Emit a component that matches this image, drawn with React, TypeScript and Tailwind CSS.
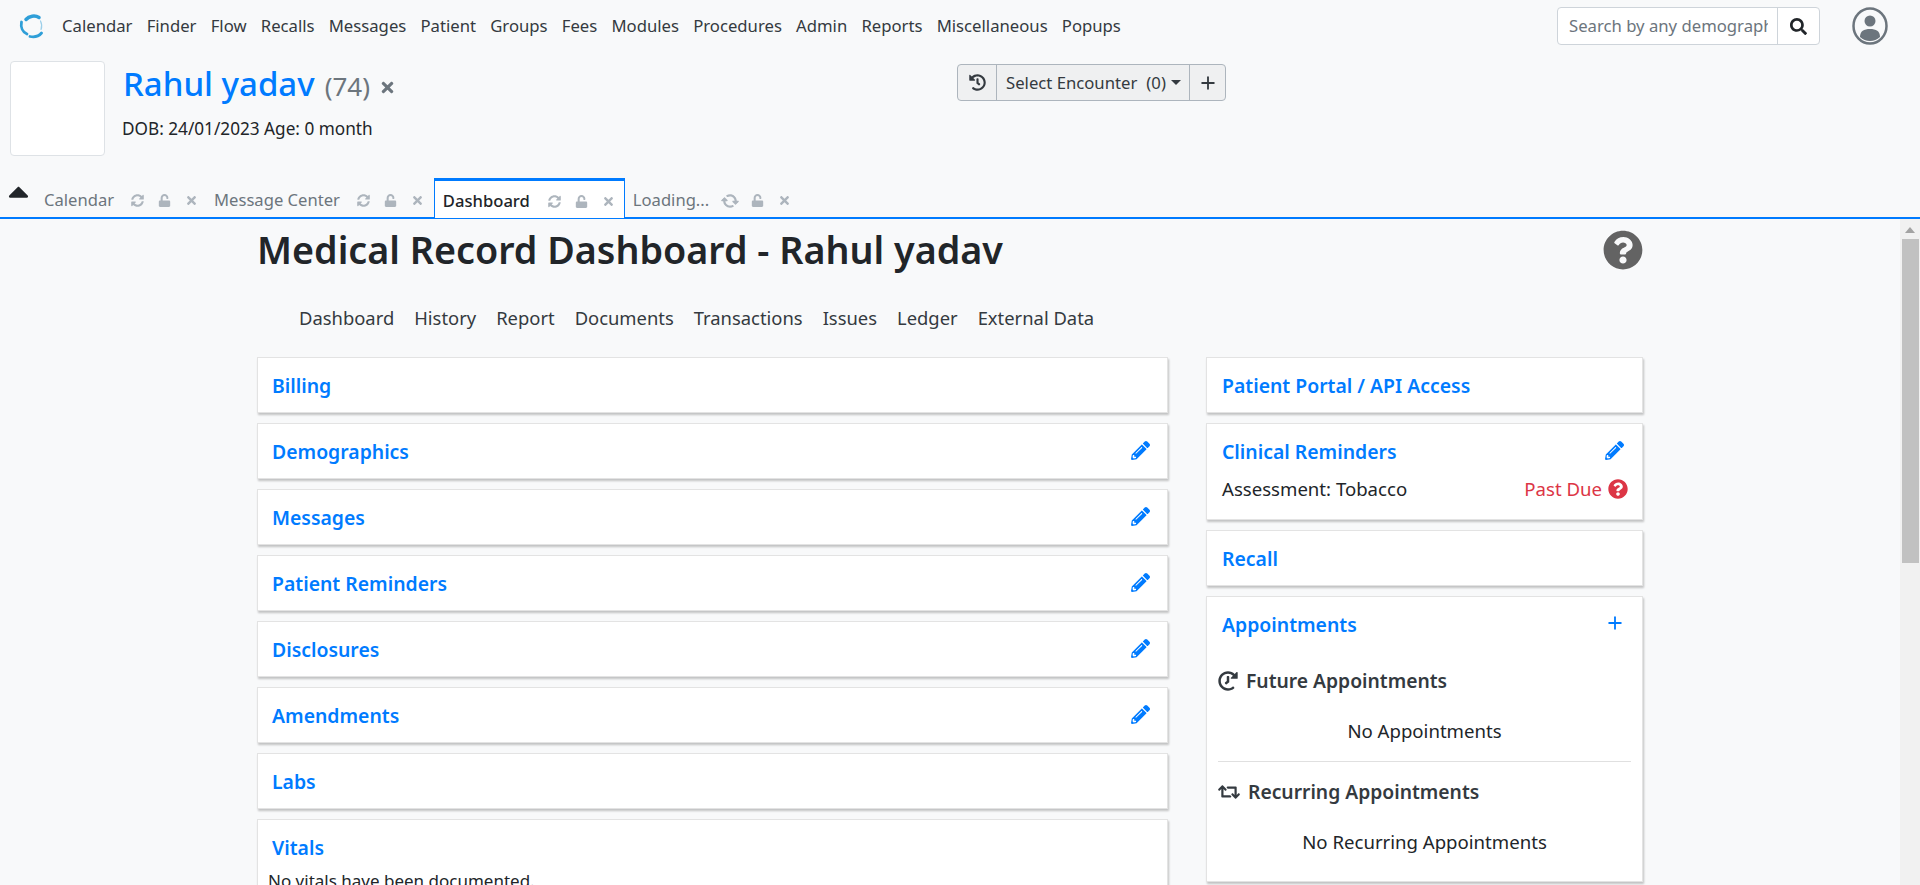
import { Plus } from "lucide-react";
import { FaCaretUp, FaHistory, FaPencilAlt, FaQuestionCircle, FaRetweet, FaSearch, FaSyncAlt, FaTimes, FaUnlock } from "react-icons/fa";

const navItems = ["Calendar", "Finder", "Flow", "Recalls", "Messages", "Patient", "Groups", "Fees", "Modules", "Procedures", "Admin", "Reports", "Miscellaneous", "Popups"];
const subNav = ["Dashboard", "History", "Report", "Documents", "Transactions", "Issues", "Ledger", "External Data"];
const leftCards = [
  { title: "Billing", edit: false },
  { title: "Demographics", edit: true },
  { title: "Messages", edit: true },
  { title: "Patient Reminders", edit: true },
  { title: "Disclosures", edit: true },
  { title: "Amendments", edit: true },
  { title: "Labs", edit: false },
];

function Logo() {
  return (
    <svg viewBox="0 0 26 26" className="w-[26px] h-[26px]" fill="none" stroke="#2f9fd8" strokeLinecap="round">
      <path d="M7 6.500C10 3 16 2 20 4.500" strokeWidth="3.500" />
      <path d="M2.500 9C1.500 14 3.500 19 8 21" strokeWidth="2.800" />
      <path d="M11 23.500C16 24.500 20 23 22.500 20" strokeWidth="2.800" />
      <path d="M21.500 8C23 11 23 14 22 16.500" strokeWidth="1.200" stroke="#9ccfe9" />
    </svg>
  );
}

function UserIcon() {
  return (
    <svg viewBox="0 0 36 38" className="w-[36px] h-[38px]">
      <ellipse cx="18" cy="19" rx="16.500" ry="17.500" fill="none" stroke="#6c757d" strokeWidth="2.500" />
      <circle cx="18" cy="14" r="5.500" fill="#6c757d" />
      <path d="M8 30c0-6 4-8 10-8s10 2 10 8c-3 2.500-6 4-10 4s-7-1.500-10-4z" fill="#6c757d" />
    </svg>
  );
}

function Tab({ label, active, loading }: { label: string; active?: boolean; loading?: boolean }) {
  return (
    <div
      className={
        active
          ? "h-[40px] w-[191px] flex items-center pl-[8px] pt-[4px] bg-white border-x border-t-[3px] border-[#007bff] -mb-px text-[#212529] font-medium"
          : "h-[39px] flex items-center pt-[6px] text-[#6c757d]"
      }
    >
      <span className={active ? "w-[105px]" : ""}>{label}</span>
      <span className={active ? "flex items-center text-[#adb5bd]" : loading ? "flex items-center text-[#adb5bd] ml-[14px]" : "flex items-center text-[#adb5bd] ml-[17px]"}>
        <FaSyncAlt className={loading ? "text-[14px] rotate-45" : "text-[13px]"} />
        <FaUnlock className="text-[13px] ml-[14px]" />
        <FaTimes className="text-[13px] ml-[14px]" />
      </span>
    </div>
  );
}

function Card({ title, edit, add, children, className }: { title: string; edit?: boolean; add?: boolean; children?: React.ReactNode; className?: string }) {
  return (
    <div className={"bg-white border border-[#e3e3e3] shadow-[1px_2px_2px_rgba(0,0,0,0.22)] " + (className ?? "px-[14px]")}>
      <div className="h-[54px] pt-[2px] flex items-center justify-between">
        <span className="text-[#007bff] font-semibold text-[19.400px]">{title}</span>
        {edit && <FaPencilAlt className="text-[#007bff] text-[19px] mr-[3px] -mt-[4px]" />}
        {add && <Plus size={20} strokeWidth={2.2} className="text-[#007bff] mr-[2px] -mt-[4px]" />}
      </div>
      {children}
    </div>
  );
}

export default function App() {
  return (
    <div className="h-screen overflow-hidden flex flex-col bg-[#f8f9fa] text-[#212529] text-[16.700px] font-['Noto_Sans',sans-serif]">
      {/* top menu */}
      <header className="h-[52px] shrink-0 flex items-center pl-[19px] pr-[32px]">
        <Logo />
        <nav className="flex gap-[14.200px] ml-[17px]">
          {navItems.map((n) => (
            <span key={n} className="text-[#343a40]">{n}</span>
          ))}
        </nav>
        <div className="ml-auto flex items-center">
          <div className="flex h-[38px] w-[263px] border border-[#ced4da] rounded-[4px] bg-white">
            <span className="w-[219px] pl-[11px] pr-[9px]">
              <span className="block overflow-hidden whitespace-nowrap leading-[36px] text-[#6c757d]">Search by any demographics</span>
            </span>
            <span className="flex-1 border-l border-[#ced4da] flex items-center justify-center text-[#212529]">
              <FaSearch className="text-[17px]" />
            </span>
          </div>
          <div className="ml-[32px]">
            <UserIcon />
          </div>
        </div>
      </header>

      {/* patient banner */}
      <section className="h-[128px] shrink-0 relative">
        <div className="flex">
          <div className="ml-[10px] mt-[9px] w-[95px] h-[95px] bg-white border border-[#dee2e6] rounded-[4px]" />
          <div className="ml-[18px] mt-[7px]">
            <div className="flex items-baseline h-[50px]">
              <span className="text-[33px] text-[#007bff] font-medium">Rahul yadav</span>
              <span className="text-[26px] text-[#6c757d] ml-[10px]">(74)</span>
              <FaTimes className="text-[17px] text-[#6c757d] ml-[9px]" />
            </div>
            <div className="mt-[7px] -ml-[1px] text-[17.200px]">DOB: 24/01/2023 Age: 0 month</div>
          </div>
        </div>
        <div className="absolute left-[957px] top-[12px] flex w-[269px] h-[37px] border border-[#adb5bd] rounded-[4px] bg-[#eff0f1] text-[#343a40]">
          <span className="w-[38px] flex items-center justify-center">
            <FaHistory className="text-[17px]" />
          </span>
          <span className="w-[194px] border-x border-[#adb5bd] flex items-center pl-[9px] whitespace-nowrap">
            Select Encounter
            <span className="ml-[9px]">(0)</span>
            <span className="ml-[5px] border-x-[5px] border-x-transparent border-t-[5px] border-t-[#343a40]" />
          </span>
          <span className="flex-1 flex items-center justify-center">
            <Plus size={20} strokeWidth={2.2} />
          </span>
        </div>
      </section>

      {/* tabs */}
      <div className="h-[39px] shrink-0 flex border-b-2 border-[#007bff] relative">
        <FaCaretUp className="absolute left-[2px] top-[-5px] text-[33px] text-[#212529]" />
        <div className="ml-[44px] flex items-end text-[16.600px]">
          <Tab label="Calendar" />
          <div className="ml-[16px]"><Tab label="Message Center" /></div>
          <div className="ml-[10px]"><Tab label="Dashboard" active /></div>
          <div className="ml-[8px]"><Tab label="Loading..." loading /></div>
        </div>
      </div>

      {/* dashboard body */}
      <div className="flex-1 min-h-0 flex">
        <main className="flex-1 min-w-0 overflow-hidden">
          <div className="w-[1386px] mx-auto">
            <div className="flex items-center justify-between h-[62px]">
              <h1 className="text-[37.700px] font-semibold">Medical Record Dashboard - Rahul yadav</h1>
              <FaQuestionCircle className="text-[40px] text-[#636363]" />
            </div>
            <div className="flex gap-[20px] pl-[42px] mt-[24px] text-[#343a40] text-[18.400px] leading-[26px]">
              {subNav.map((s) => (
                <span key={s}>{s}</span>
              ))}
            </div>
            <div className="flex gap-[38px] mt-[26px] items-start text-[18.600px] leading-[26px]">
              <div className="w-[911px] flex flex-col gap-[10px]">
                {leftCards.map((c) => (
                  <Card key={c.title} title={c.title} edit={c.edit} />
                ))}
                <Card title="Vitals">
                  <div className="-ml-[4px] -mt-[6px] text-[#212529] text-[17px]">No vitals have been documented.</div>
                </Card>
              </div>
              <div className="w-[437px] flex flex-col gap-[10px]">
                <Card title="Patient Portal / API Access" className="px-[15px]" />
                <Card title="Clinical Reminders" edit className="px-[15px] pb-[17px]">
                  <div className="flex items-center justify-between -mt-[2px]">
                    <span>Assessment: Tobacco</span>
                    <span className="flex items-center text-[#dc3545]">
                      Past Due
                      <FaQuestionCircle className="text-[20px] ml-[6px] -mr-[1px]" />
                    </span>
                  </div>
                </Card>
                <Card title="Recall" className="px-[15px]" />
                <Card title="Appointments" add className="px-[15px]">
                  <div className="-mx-[4px] text-[#212529]">
                    <div className="flex items-center gap-[8px] h-[36px] mt-[12px] font-semibold text-[#343a40] text-[19.300px]">
                      <FaHistory className="text-[20px] text-[#343a40] -scale-x-100" />
                      Future Appointments
                    </div>
                    <div className="text-center mt-[20px] leading-[24px]">No Appointments</div>
                    <div className="border-t border-[#e0e0e0] mt-[18px]" />
                    <div className="flex items-center gap-[8px] h-[36px] mt-[12px] font-semibold text-[#343a40] text-[19.300px]">
                      <FaRetweet className="text-[22px]" />
                      Recurring Appointments
                    </div>
                    <div className="text-center mt-[20px] leading-[24px] pb-[27px]">No Recurring Appointments</div>
                  </div>
                </Card>
              </div>
            </div>
          </div>
        </main>
        {/* page scrollbar */}
        <div className="w-[20px] shrink-0 bg-[#f1f1f1] flex flex-col items-center">
          <span className="mt-[8px] border-x-[5px] border-x-transparent border-b-[6px] border-b-[#a3a3a3]" />
          <div className="mt-[6px] w-[17px] h-[324px] bg-[#c1c1c1]" />
        </div>
      </div>
    </div>
  );
}
